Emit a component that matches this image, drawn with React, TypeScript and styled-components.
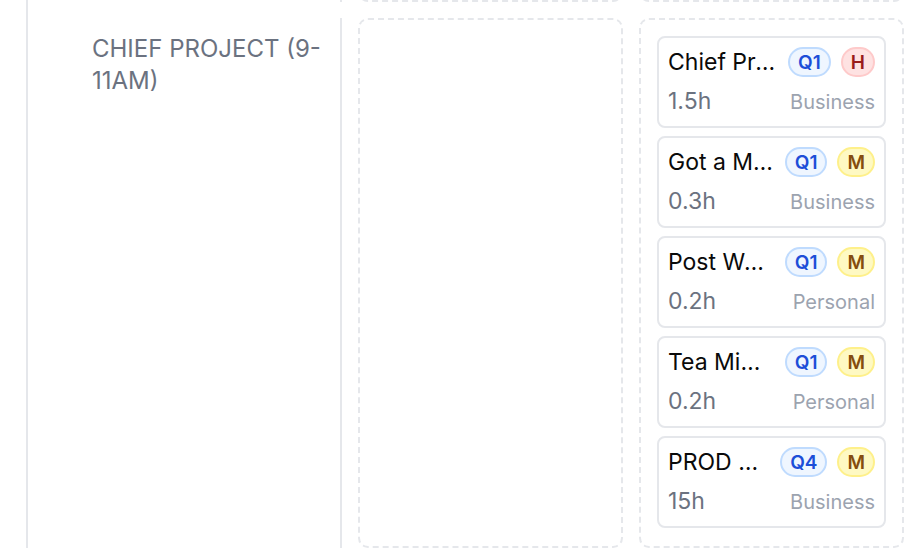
import React from "react"
import styled, { createGlobalStyle } from "styled-components"

const Global = createGlobalStyle`
  html, body {
    margin: 0;
    padding: 0;
    background: #ffffff;
    font-family: Inter, "Noto Sans", sans-serif;
    overflow: hidden;
  }
`

const Viewport = styled.div`
  width: 920px;
  height: 550px;
  overflow: hidden;
  padding-left: 26px;
  box-sizing: border-box;
`

const Board = styled.div`
  border-left: 2px solid #e5e7eb;
  display: flex;
  flex-direction: column;
  gap: 16px;
  /* page is scrolled: only the bottom edge of the previous row shows */
  margin-top: -60px;
  height: calc(100% + 58px);
`

const Row = styled.div<{ $min?: number; $grow?: boolean }>`
  display: grid;
  grid-template-columns: 314px 265px 265px 265px;
  column-gap: 16px;
  min-height: ${(p) => p.$min ?? 0}px;
  flex: ${(p) => (p.$grow ? "1 0 auto" : "0 0 auto")};
`

const Label = styled.div`
  border-right: 2px solid #e5e7eb;
  padding: 15px 16px 0 64px;
  color: #6b7280;
  font-size: 24px;
  line-height: 32px;
  text-transform: uppercase;
`

const Slot = styled.div`
  border: 2px dashed #e5e7eb;
  border-radius: 10px;
  background: #ffffff;
  padding: 16px;
  display: flex;
  flex-direction: column;
  gap: 8px;
`

const Card = styled.div`
  background: #ffffff;
  border: 2px solid #e5e7eb;
  border-radius: 8px;
  padding: 9px;
  display: flex;
  flex-direction: column;
  gap: 10px;
`

const Top = styled.div`
  display: flex;
  align-items: center;
  gap: 8px;
  height: 30px;
`

const Title = styled.div`
  flex: 1;
  min-width: 0;
  white-space: nowrap;
  overflow: hidden;
  text-overflow: ellipsis;
  font-size: 23px;
  line-height: 30px;
  color: #0a0a0a;
`

const Badges = styled.div`
  display: flex;
  gap: 10px;
`

const tones = {
  q: { bg: "#eff6ff", border: "#bfdbfe", fg: "#1d4ed8" },
  H: { bg: "#fee2e2", border: "#fecaca", fg: "#991b1b" },
  M: { bg: "#fef9c3", border: "#fef08a", fg: "#854d0e" },
}

const Badge = styled.span<{ $tone: keyof typeof tones }>`
  display: inline-flex;
  align-items: center;
  justify-content: center;
  height: 30px;
  box-sizing: border-box;
  padding: 0 8px;
  border-radius: 999px;
  font-size: 19px;
  font-weight: 600;
  background: ${(p) => tones[p.$tone].bg};
  border: 2px solid ${(p) => tones[p.$tone].border};
  color: ${(p) => tones[p.$tone].fg};
`

const Bottom = styled.div`
  display: flex;
  align-items: baseline;
  justify-content: space-between;
  line-height: 29px;
`

const Hours = styled.span`
  font-size: 23px;
  color: #6b7280;
`

const Category = styled.span`
  font-size: 20px;
  color: #9ca3af;
`

type Task = { title: string; q: string; p: "H" | "M"; hours: string; cat: string }

const tasks: Task[] = [
  { title: "Chief Project Review", q: "Q1", p: "H", hours: "1.5h", cat: "Business" },
  { title: "Got a Meeting", q: "Q1", p: "M", hours: "0.3h", cat: "Business" },
  { title: "Post Weekly Update", q: "Q1", p: "M", hours: "0.2h", cat: "Personal" },
  { title: "Tea Mimosa Order", q: "Q1", p: "M", hours: "0.2h", cat: "Personal" },
  { title: "PROD Work", q: "Q4", p: "M", hours: "15h", cat: "Business" },
]

const TaskCard = ({ t }: { t: Task }) => (
  <Card>
    <Top>
      <Title>{t.title}</Title>
      <Badges>
        <Badge $tone="q">{t.q}</Badge>
        <Badge $tone={t.p}>{t.p}</Badge>
      </Badges>
    </Top>
    <Bottom>
      <Hours>{t.hours}</Hours>
      <Category>{t.cat}</Category>
    </Bottom>
  </Card>
)

export default function App() {
  return (
    <Viewport>
      <Global />
      <Board>
        <Row $min={62}>
          <Label />
          <Slot />
          <Slot />
          <Slot />
        </Row>
        <Row $grow>
          <Label>Chief Project (9-11AM)</Label>
          <Slot />
          <Slot>
            {tasks.map((t) => (
              <TaskCard key={t.title} t={t} />
            ))}
          </Slot>
          <Slot />
        </Row>
      </Board>
    </Viewport>
  )
}
